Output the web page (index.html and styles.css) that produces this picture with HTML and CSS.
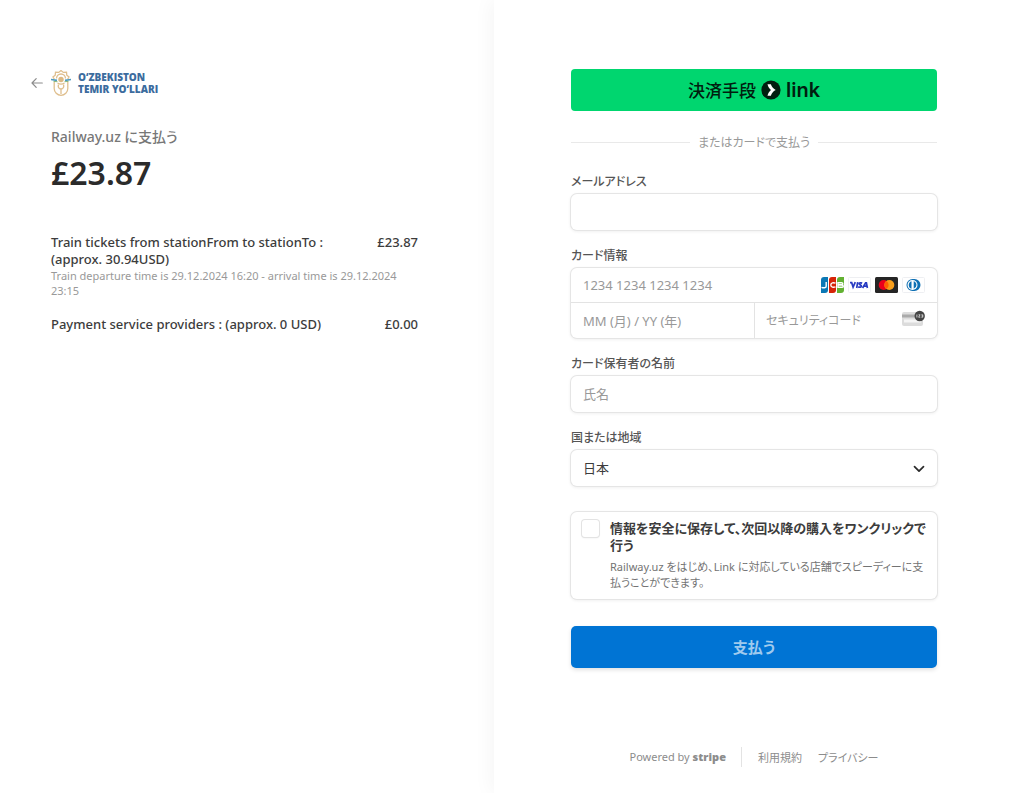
FILE: index.html
```html
<!DOCTYPE html>
<html lang="ja">
<head>
<meta charset="utf-8">
<meta name="viewport" content="width=device-width, initial-scale=1">
<title>Railway.uz</title>
<link rel="stylesheet" href="styles.css">
</head>
<body>
<div class="checkout">
  <section class="summary">
    <header class="brand">
      <a class="back" href="#" aria-label="戻る">
        <svg width="12" height="12" viewBox="0 0 12 12" fill="none" stroke="#8c8c8c" stroke-width="1.2" stroke-linecap="round" stroke-linejoin="round"><path d="M11.3 6H1M5.2 1.7 1 6l4.2 4.3"/></svg>
      </a>
      <svg class="emblem" width="20" height="28" viewBox="0 0 20 28" fill="none" stroke="#dfbf8e" stroke-width="1.3">
        <path d="M10 1.500l2.300 1.900 3.200-.3.300 3.100L18 8l-1.300 2.200M10 1.500 7.700 3.400l-3.200-.3L4.200 6.200 2 8l1.300 2.200"/>
        <path d="M3.200 13v6.500a6.800 6.800 0 0 0 13.600 0V13"/>
        <path d="M5.500 9.500a4.500 4.500 0 0 1 9 0M6.500 14c2.300 1.500 4.700 1.500 7 0"/>
        <circle cx="10" cy="10.500" r="2.700" fill="#dcb983" stroke="none"/>
        <path d="M10 19v6M7.500 15.500c-.8 2.500.7 4.300 2.500 5 1.800-.7 3.300-2.500 2.500-5"/>
        <path d="M0 10.500l6 .8M20 10.500l-6 .8" stroke="#4d9ac0" stroke-width="1.700"/>
        <path d="M2.500 12.400l4 .3M17.500 12.400l-4 .3" stroke="#8cb87a" stroke-width="1"/>
      </svg>
      <span class="brand-name">O‘ZBEKISTON<br>TEMIR YO‘LLARI</span>
    </header>
    <h1 class="payee">Railway.uz に支払う</h1>
    <p class="total">£23.87</p>
    <ul class="items">
      <li class="item">
        <p class="item-name">Train tickets from stationFrom to stationTo : (approx. 30.94USD)</p>
        <span class="item-price">£23.87</span>
        <p class="item-note">Train departure time is 29.12.2024 16:20 - arrival time is 29.12.2024 23:15</p>
      </li>
      <li class="item">
        <p class="item-name">Payment service providers : (approx. 0 USD)</p>
        <span class="item-price">£0.00</span>
      </li>
    </ul>
  </section>

  <main class="payment">
    <form class="form">
      <button class="link-button" type="button">
        <span>決済手段</span>
        <svg width="20" height="20" viewBox="0 0 20 20"><circle cx="10" cy="10" r="9.600" fill="#011e0f"/><path d="M6.500 4.300h3.400c.7 2.400 2.300 4.400 4.800 5.700-2.500 1.300-4.100 3.300-4.800 5.700H6.500c.6-2.400 1.700-4.200 3.500-5.700-1.800-1.500-2.900-3.300-3.500-5.700z" fill="#fff"/></svg>
        <span class="link-word">link</span>
      </button>
      <div class="divider"><span>またはカードで支払う</span></div>

      <div class="field">
        <label class="label" for="email">メールアドレス</label>
        <input class="input boxed" id="email" type="email">
      </div>

      <div class="field">
        <label class="label" for="number">カード情報</label>
        <div class="card-group boxed">
          <div class="cell cell-number">
            <input class="input" id="number" placeholder="1234 1234 1234 1234">
            <span class="cards">
              <svg width="23" height="16" viewBox="0 0 23 16"><path d="M3 0h4v13a3 3 0 0 1-3 3H0V3a3 3 0 0 1 3-3z" fill="#0b78b5"/><path d="M11 0h4v13a3 3 0 0 1-3 3H8V3a3 3 0 0 1 3-3z" fill="#d62408"/><path d="M19 0h4v13a3 3 0 0 1-3 3h-4V3a3 3 0 0 1 3-3z" fill="#62b132"/><path d="M5.200 5v4.300c0 1.600-2.500 1.900-4.700 1M14.500 6.200c-2-.7-4.700-.7-4.700 1.800s2.700 2.500 4.700 1.800M17 5.800h3.500c1.800 0 1.800 2 0 2H17zM17 8h3.800c2 0 2 2.300 0 2.300H17z" fill="none" stroke="#fff" stroke-width="1.400"/></svg>
              <svg width="23" height="16" viewBox="0 0 23 16"><rect x=".5" y=".5" width="22" height="15" rx="1" fill="#fff" stroke="#eeeff2"/><g fill="none" stroke="#283bc2" stroke-width="1.700"><path d="M2 5.700h1.700l1.400 4.500L7.300 5.200M9.700 5.200 8.700 11M14.200 6.100c-1.500-.6-3-.3-3 .7 0 1.200 2.300 1 2.200 2.300-.1 1.300-1.800 1.300-3.200.8M14.600 11l3-5.100h.8l1 5.100M16 9.200h3.300"/></g></svg>
              <svg width="23" height="16" viewBox="0 0 23 16"><rect width="23" height="16" rx="1.500" fill="#252525"/><circle cx="8.700" cy="8" r="5" fill="#eb001b"/><circle cx="14.300" cy="8" r="5" fill="#f79e1b"/><path d="M11.500 3.900a5 5 0 0 1 0 8.200 5 5 0 0 1 0-8.200z" fill="#ff5f00"/></svg>
              <svg width="23" height="16" viewBox="0 0 23 16"><rect x=".5" y=".5" width="22" height="15" rx="1" fill="#fff" stroke="#eeeff2"/><path d="M10.500 2h2a6 6 0 0 1 0 12h-2a6 6 0 0 1 0-12z" fill="#0f70b4"/><circle cx="10.500" cy="8" r="5" fill="#fff"/><path d="M9.500 4.200v7.600a4 4 0 0 1 0-7.600zM11.700 4.200v7.600a4 4 0 0 0 0-7.600z" fill="#0f70b4"/></svg>
            </span>
          </div>
          <div class="cell">
            <input class="input" aria-label="有効期限" placeholder="MM (月) / YY (年)">
          </div>
          <div class="cell cell-code">
            <input class="input" aria-label="セキュリティコード" placeholder="セキュリティコード">
            <svg class="code-icon" width="24" height="18" viewBox="0 0 24 18"><rect x="1" y="2" width="21" height="14" rx="2" fill="#dcdcdc"/><path d="M1 4.500h21v3H1z" fill="#aaa"/><path d="M3 9.500h17v3H3z" fill="#f5f5f5"/><circle cx="18.700" cy="6" r="5.200" fill="#444"/><path d="M15.900 4.500v3M17.500 4.800h1.600l-1.500 2.400h1.700M20.400 4.800h1.400v2.400h-1.400M20.700 6h1" fill="none" stroke="#fff" stroke-width=".7"/></svg>
          </div>
        </div>
      </div>

      <div class="field">
        <label class="label" for="name">カード保有者の名前</label>
        <input class="input boxed" id="name" placeholder="氏名">
      </div>

      <div class="field">
        <label class="label" for="country">国または地域</label>
        <div class="select-wrap">
          <select class="input boxed" id="country"><option>日本</option></select>
          <svg class="chevron" width="12" height="8" viewBox="0 0 12 8" fill="none" stroke="#2b2b2b" stroke-width="1.700" stroke-linecap="round" stroke-linejoin="round"><path d="M1.500 1.700 6 6.200l4.500-4.500"/></svg>
        </div>
      </div>

      <div class="save boxed">
        <input class="check" id="save" type="checkbox">
        <label class="save-text" for="save">
          <span class="save-title">情報を安全に保存して、次回以降の購入をワンクリックで行う</span>
          <span class="save-note">Railway.uz をはじめ、Link に対応している店舗でスピーディーに支払うことができます。</span>
        </label>
      </div>

      <button class="pay" type="submit">支払う</button>
    </form>

    <footer class="footer">
      <a class="powered" href="#">Powered by <b class="stripe">stripe</b></a>
      <nav class="legal"><a href="#">利用規約</a><a href="#">プライバシー</a></nav>
    </footer>
  </main>
</div>
</body>
</html>
```
FILE: styles.css
```css
* { box-sizing: border-box; }

body {
  margin: 0;
  background: #fff;
  color: #3c3c3c;
  font-family: "Noto Sans", "Noto Sans CJK JP", sans-serif;
  font-size: 13px;
  line-height: 17px;
  font-feature-settings: "palt";
}

h1, p, ul { margin: 0; padding: 0; }
a { color: inherit; text-decoration: none; }
button, input, select { font: inherit; font-feature-settings: inherit; color: inherit; }
svg { display: block; flex: none; }

.checkout {
  display: grid;
  grid-template-columns: minmax(0, 494fr) minmax(0, 530fr);
  min-height: 100vh;
}

/* Order summary */
.summary { padding: 68px 76px 40px 51px; }

.brand {
  display: flex;
  align-items: center;
  gap: 7px;
  height: 29px;
  margin-left: -20px;
}
.back { padding-right: 1px; }
.brand-name {
  color: #3c6c9e;
  font-family: "Open Sans", sans-serif;
  font-size: 10px;
  font-weight: 800;
  line-height: 12px;
}

.payee {
  margin-top: 30px;
  color: #777;
  font-size: 14px;
  font-weight: 500;
  line-height: 20px;
}
.total {
  margin-top: 4px;
  color: #2b2b2b;
  font-size: 32px;
  font-weight: 600;
  line-height: 44px;
}

.items {
  display: grid;
  gap: 18px;
  margin-top: 39px;
  list-style: none;
}
.item {
  display: grid;
  grid-template-columns: minmax(0, 1fr) auto;
  column-gap: 48px;
}
.item-name, .item-price { font-weight: 500; }
.item-note {
  grid-column: 1 / -1;
  padding-right: 20px;
  color: #999;
  font-size: 11px;
  line-height: 15px;
}

/* Payment form */
.payment {
  padding: 69px 87px 24px 77px;
  background: #fff;
  box-shadow: -4px 0 18px rgba(0, 0, 0, .04);
}
.form { display: flex; flex-direction: column; }

.link-button {
  display: flex;
  align-items: center;
  justify-content: center;
  gap: 5px;
  height: 42px;
  padding: 0;
  border: 0;
  border-radius: 4px;
  background: #00d66f;
  color: #011e0f;
  font-size: 17px;
  font-weight: 500;
}
.link-word { font-family: Inter, sans-serif; font-size: 20px; font-weight: 600; }

.divider {
  display: flex;
  align-items: center;
  gap: 8px;
  margin: 23px 0 0;
  color: #999;
  font-size: 12px;
}
.divider::before, .divider::after {
  content: "";
  flex: 1;
  height: 1px;
  background: #e9e9e9;
}

.field {
  display: flex;
  flex-direction: column;
  gap: 4px;
  margin-top: 17px;
}
.divider + .field { margin-top: 22px; }
.label {
  color: #555;
  font-size: 12px;
  font-weight: 500;
  line-height: 17px;
}

.boxed {
  border-radius: 6px;
  background: #fff;
  box-shadow: 0 0 0 1px #e5e5e5, 0 1px 3px 1px rgba(0, 0, 0, .06);
}
.input {
  width: 100%;
  min-width: 0;
  height: 36px;
  padding: 0 12px;
  border: 0;
  outline: 0;
  appearance: none;
}
.input:not(.boxed) { height: 34px; background: transparent; }
.input::placeholder { color: #999; opacity: 1; }

.card-group { display: grid; grid-template-columns: 1fr 1fr; }
.cell { display: flex; align-items: center; height: 35px; padding-right: 12px; }
.cell-number { grid-column: 1 / -1; border-bottom: 1px solid #e3e3e3; }
.cell-code { border-left: 1px solid #e3e3e3; }
.cell-code .input { padding: 0 0 0 11px; font-size: 12px; }
.cell-code .code-icon { margin-top: -4px; }
.cards { display: flex; gap: 4px; }

.select-wrap { position: relative; display: flex; }
.chevron { position: absolute; right: 12px; top: 15px; pointer-events: none; }

.save {
  display: flex;
  align-items: flex-start;
  gap: 11px;
  margin-top: 26px;
  padding: 8px 8px 8px 11px;
}
.check {
  flex: none;
  width: 17px;
  height: 17px;
  margin: 0;
  border-radius: 3px;
  background: #fff;
  box-shadow: 0 0 0 1px #e3e3e3, 0 1px 2px rgba(0, 0, 0, .1);
  appearance: none;
}
.check:checked { background: #0074d4; }
.save-text { display: grid; gap: 5px; }
.save-title { font-weight: 600; }
.save-note { color: #737373; font-size: 11px; line-height: 16px; }

.pay {
  height: 42px;
  margin-top: 27px;
  padding: 0;
  border: 0;
  border-radius: 5px;
  background: #0074d4;
  box-shadow: 0 2px 4px rgba(0, 0, 0, .12);
  color: #9fcaee;
  font-size: 15px;
  font-weight: 600;
}

.footer {
  display: flex;
  align-items: center;
  justify-content: center;
  margin-top: 79px;
  color: #8c8c8c;
  font-size: 11px;
}
.powered { padding-right: 15px; border-right: 1px solid #e3e3e3; line-height: 20px; }
.stripe { font-family: "Open Sans", sans-serif; font-weight: 800; }
.legal { display: flex; gap: 16px; padding-left: 16px; }
```
